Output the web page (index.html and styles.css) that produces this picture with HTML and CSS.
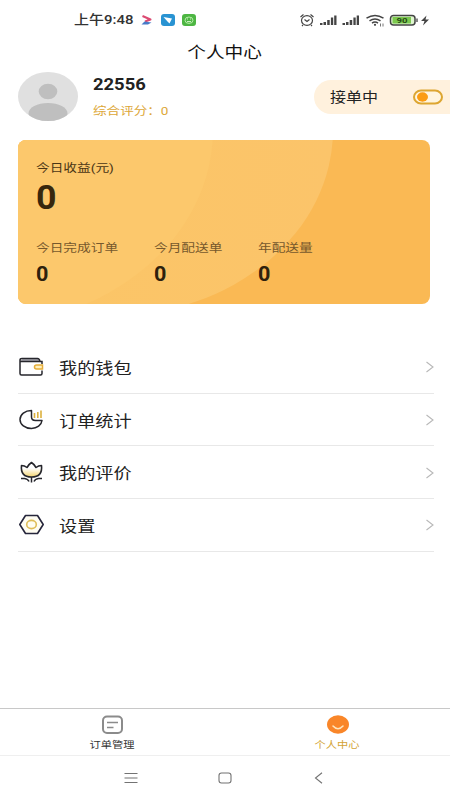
FILE: index.html
```html
<!DOCTYPE html>
<html lang="zh-CN">
<head>
<meta charset="utf-8">
<title>个人中心</title>
<link rel="stylesheet" href="styles.css">
</head>
<body>
<header class="status">
  <span class="clock"><span class="wide">上午9:48</span></span>
  <svg class="apps" width="58" height="14" viewBox="0 0 58 14">
    <path d="M3.500 3 L11.500 6.500 L6 8.500" fill="none" stroke="#dc4a72" stroke-width="2" stroke-linejoin="round"/><path d="M2.500 11.500 L5.500 8.500 L12.500 9.500 L9 11.500Z" fill="#477bc8"/>
    <rect x="22" y="1" width="14" height="12" rx="3" fill="#2993d2"/><path d="M24.500 4 L33 5.500 L30.500 10.500 L28.500 8.500Z" fill="#fff"/>
    <rect x="43" y="1" width="14" height="12" rx="3" fill="#4db643"/><ellipse cx="50" cy="7.200" rx="4" ry="3.200" fill="none" stroke="#b9edaa"/><path d="M48 6h1M51 6h1M48 8.500h4" stroke="#c7f1bd"/>
  </svg>
  <svg class="signals" width="134" height="16" viewBox="0 0 134 16">
    <g fill="none" stroke="#444" stroke-width="1.200">
      <ellipse cx="8" cy="8.500" rx="5.500" ry="4.800"/><path d="M5.500 7.500L8 9.500L10.500 7.500M1.500 5L4.500 2.500M11.500 2.500L14.500 5M4 13L3 14M12 13L13 14"/>
    </g>
    <g id="bars" fill="#444"><path d="M21 11h2.500v2h-2.500zM24.500 10h2.500v3h-2.500zM28.200 8h2.500v5h-2.500zM31.900 5.500h2.300v7.500h-2.300zM35.200 3.500h2.300v9.500h-2.300z"/></g>
    <use href="#bars" x="22.500"/>
    <g fill="none" stroke="#444" stroke-width="1.500"><path d="M67.500 6.200Q76 .8 84.500 6.200M70.500 8.800Q76 5 81.500 8.800M73 11.200Q76 9 79 11.200"/></g>
    <circle cx="76" cy="12.800" r="1.100" fill="#444"/><path d="M81.500 11.500v3M84 11.500v3" stroke="#777"/>
    <rect x="91.500" y="3.500" width="24.500" height="9.500" rx="3" fill="#dff5d0" stroke="#444" stroke-width="1.500"/><rect x="93.500" y="5" width="18.500" height="6.500" fill="#7cc94e"/><path d="M118 6.500v3.500" stroke="#444" stroke-width="1.300"/>
    <text x="97.500" y="11" class="charge" textLength="11" lengthAdjust="spacingAndGlyphs">90</text>
    <path d="M127.500 3.500L122 9h3.500l-1.500 4.500L130 7.500h-3.500z" fill="#444"/>
  </svg>
</header>
<h1 class="title"><span>个人中心</span></h1>

<section class="profile">
  <svg width="60" height="50" viewBox="0 0 60 50">
    <defs><clipPath id="face"><ellipse cx="30" cy="24.500" rx="30" ry="24.500"/></clipPath></defs>
    <g clip-path="url(#face)"><rect width="60" height="50" fill="#e0e0e0"/><ellipse cx="30" cy="19.500" rx="9.300" ry="7.800" fill="#bfbfbf"/><ellipse cx="30" cy="41.500" rx="19.500" ry="10.500" fill="#bfbfbf"/></g>
  </svg>
  <div class="person">
    <div class="name"><span class="wide">22556</span></div>
    <div class="score"><span class="wide">综合评分：0</span></div>
  </div>
  <div class="accept">
    <span class="wide">接单中</span>
    <svg width="32" height="16" viewBox="0 0 32 16"><rect x="2" y="1.500" width="28" height="13" rx="7" fill="#fff5df" stroke="#dda631" stroke-width="2"/><ellipse cx="10.500" cy="8" rx="5.500" ry="4.700" fill="#fb9c12"/></svg>
  </div>
</section>

<section class="card">
  <svg class="waves" width="411" height="164" viewBox="0 0 411 164">
    <defs>
      <linearGradient id="outer"><stop offset=".4" stop-color="#fbc567"/><stop offset="1" stop-color="#fbc46a"/></linearGradient>
    </defs>
    <ellipse cx="92" cy="-10" rx="223" ry="186" fill="url(#outer)"/>
    <ellipse cx="-40" cy="-10" rx="235" ry="196" fill="#fcc86c"/>
  </svg>
  <div class="income">
    <div class="label dark"><span class="wide">今日收益(元)</span></div>
    <div class="big"><span class="wide">0</span></div>
  </div>
  <div class="stats">
    <div><div class="label"><span class="wide">今日完成订单</span></div><div class="num"><span class="wide">0</span></div></div>
    <div><div class="label"><span class="wide">今月配送单</span></div><div class="num"><span class="wide">0</span></div></div>
    <div><div class="label"><span class="wide">年配送量</span></div><div class="num"><span class="wide">0</span></div></div>
  </div>
</section>

<nav class="menu">
  <div class="row">
    <svg width="28" height="24" viewBox="0 0 28 24"><path d="M2 6.500L5 3.500H19Q21 3.500 21.500 6.500Z" fill="#aaa8b0"/><path d="M24 9V6.500H2V5Q2 3.500 4 3.500H19.500Q21.500 3.500 22 6.500M2 6V18.500Q2 20 3.500 20H22.500Q24 20 24 18.500V15.500" fill="none" stroke="#26262c" stroke-width="1.500"/><path d="M24.500 10h-6q-2 0-2 2t2 2H24.500z" fill="#fff0bf" stroke="#e5ad3a" stroke-width="1.500"/></svg>
    <span class="wide">我的钱包</span><svg class="arrow" width="10" height="14" viewBox="0 0 10 14"><path d="M1.500 2L8 7L1.500 12"/></svg>
  </div>
  <div class="row">
    <svg width="28" height="24" viewBox="0 0 28 24"><path d="M13.500 2.500C7 2.500 2 6.500 2 11.500S7 20.500 13.500 20.500C19 20.500 23.500 17 24 12.500H17.500Q13.500 12.500 13.500 9Z" fill="none" stroke="#26262c" stroke-width="1.500" stroke-linejoin="round"/><path d="M16.500 5v5M19.800 4v6M23 2.500V10" stroke="#ddb13e" stroke-width="1.600"/></svg>
    <span class="wide">订单统计</span><svg class="arrow" width="10" height="14" viewBox="0 0 10 14"><path d="M1.500 2L8 7L1.500 12"/></svg>
  </div>
  <div class="row">
    <svg width="28" height="24" viewBox="0 0 28 24"><defs><linearGradient id="petal" x2="0" y2="1"><stop offset=".4" stop-color="#fff"/><stop offset="1" stop-color="#f3d36d"/></linearGradient></defs><path d="M3.500 4.500Q6.500 4.500 9 6.500Q11 3 13.500 1.500Q16 3 18 6.500Q20.500 4.500 23.500 4.500Q24.800 16 13.500 16T3.500 4.500Z" fill="url(#petal)" stroke="#26262c" stroke-width="1.600" stroke-linejoin="round"/><path d="M13.500 16V21.500M3 17.500H6.500Q10 18 11 20.500M24 17.500H20.500Q17 18 16 20.500" fill="none" stroke="#26262c" stroke-width="1.500"/></svg>
    <span class="wide">我的评价</span><svg class="arrow" width="10" height="14" viewBox="0 0 10 14"><path d="M1.500 2L8 7L1.500 12"/></svg>
  </div>
  <div class="row">
    <svg width="28" height="24" viewBox="0 0 28 24"><path d="M1.800 11.500L7.500 2.500H19.500L25.200 11.500L19.500 20.500H7.500Z" fill="#fffdf2" stroke="#26263c" stroke-width="1.600" stroke-linejoin="round"/><ellipse cx="13.500" cy="11.500" rx="4.800" ry="4.100" fill="#fffdf0" stroke="#dfbd57" stroke-width="1.600"/></svg>
    <span class="wide">设置</span><svg class="arrow" width="10" height="14" viewBox="0 0 10 14"><path d="M1.500 2L8 7L1.500 12"/></svg>
  </div>
</nav>

<footer class="tabs">
  <div class="tab">
    <svg width="24" height="20" viewBox="0 0 24 20"><rect x="2" y="1.500" width="19" height="16.500" rx="4" fill="none" stroke="#8b8b8b" stroke-width="2"/><path d="M6 7.500h11M6 12.500h6.500" stroke="#8b8b8b" stroke-width="1.600"/></svg>
    <span>订单管理</span>
  </div>
  <div class="tab active">
    <svg width="24" height="20" viewBox="0 0 24 20"><ellipse cx="12" cy="9.500" rx="11" ry="9.200" fill="#f98629"/><path d="M7 11Q12 16.500 17 11" fill="none" stroke="#ffe5bd" stroke-width="1.600" stroke-linecap="round"/></svg>
    <span>个人中心</span>
  </div>
</footer>
<div class="system">
  <svg width="14" height="12" viewBox="0 0 14 12"><path d="M.5 1.500h13M.5 6h13M.5 10.500h13"/></svg>
  <svg width="14" height="12" viewBox="0 0 14 12"><rect x="1" y="1" width="12" height="10" rx="2.500"/></svg>
  <svg width="14" height="12" viewBox="0 0 14 12"><path d="M11 .8L4.500 6L11 11.200"/></svg>
</div>
</body>
</html>
```

FILE: styles.css
```css
* { box-sizing: border-box; }
body {
  margin: 0;
  width: 450px;
  height: 800px;
  overflow: hidden;
  display: flex;
  flex-direction: column;
  background: #fff;
  color: #222;
  font-family: Roboto, "Noto Sans CJK SC", sans-serif;
}
svg { display: block; flex: none; }
.wide { display: inline-block; transform: scaleX(1.18); transform-origin: left center; white-space: nowrap; }

.status { height: 40px; display: flex; align-items: center; padding-left: 74px; }
.clock { width: 65px; font-size: 12.7px; font-weight: 500; line-height: 20px; color: #333; }
.signals { margin-left: 102px; }
.charge { font: bold 8px Roboto, sans-serif; fill: #284d16; }

.title { margin: 0; height: 24px; font-size: 15.8px; line-height: 26px; font-weight: 400; text-align: center; color: #111; }
.title span { display: inline-block; transform: scaleX(1.18); }

.profile { height: 76px; display: flex; align-items: flex-start; padding: 8px 0 0 18px; }
.person { margin-left: 15px; flex: 1; }
.name { height: 25px; font-size: 15.6px; line-height: 26px; font-weight: 700; }
.score { height: 26px; font-size: 11.5px; line-height: 28px; color: #dda737; }
.accept {
  width: 136px;
  height: 34px;
  margin-top: 8px;
  padding: 0 0 0 16px;
  border-radius: 20px 0 0 20px;
  background: #fff1dd;
  display: flex;
  align-items: center;
  font-size: 13.6px;
}
.accept .wide { margin-top: -2px; }
.accept svg { margin-left: 41px; }

.card {
  position: relative;
  width: 411.500px;
  height: 164px;
  margin-left: 18px;
  padding: 18px;
  border-radius: 8px;
  overflow: hidden;
  background: #fab954;
}
.waves { position: absolute; left: 0; top: 0; }
.income, .stats { position: relative; }
.label { height: 20px; font-size: 11.6px; line-height: 21px; color: #76582c; }
.dark { color: #4a3515; line-height: 20px; }
.big { height: 38px; font-size: 34px; line-height: 38px; font-weight: 700; color: #38270d; }
.big .wide { transform: scaleX(1.05); }
.stats { display: grid; grid-template-columns: 118px 104px 1fr; margin-top: 22px; }
.num { height: 30px; font-size: 20px; line-height: 32px; font-weight: 700; color: #2e210d; }
.num .wide { transform: scaleX(1.08); }

.menu { margin: 37px 16px 0 18px; }
.row { height: 52.700px; padding-top: 1px; display: flex; align-items: center; border-bottom: 1px solid #e8e8e8; font-size: 15.4px; }
.row .wide { margin: -1px 0 0 13px; }
.arrow { margin: 0 -1px 0 auto; }
.arrow path { fill: none; stroke: #b8b8b8; stroke-width: 1.100; }

.tabs { height: 48px; margin-top: auto; border-top: 1px solid #c8c8c8; border-bottom: 1px solid #efefef; display: flex; }
.tab { flex: 1; display: flex; flex-direction: column; align-items: center; padding-top: 6px; font-size: 9.500px; line-height: 20px; color: #333; }
.tab span { transform: scaleX(1.18); }
.active { color: #d3a334; }
.system { height: 44px; padding: 0 125px 1px 124px; display: flex; justify-content: space-between; align-items: center; }
.system svg { fill: none; stroke: #737373; stroke-width: 1.100; }
```
